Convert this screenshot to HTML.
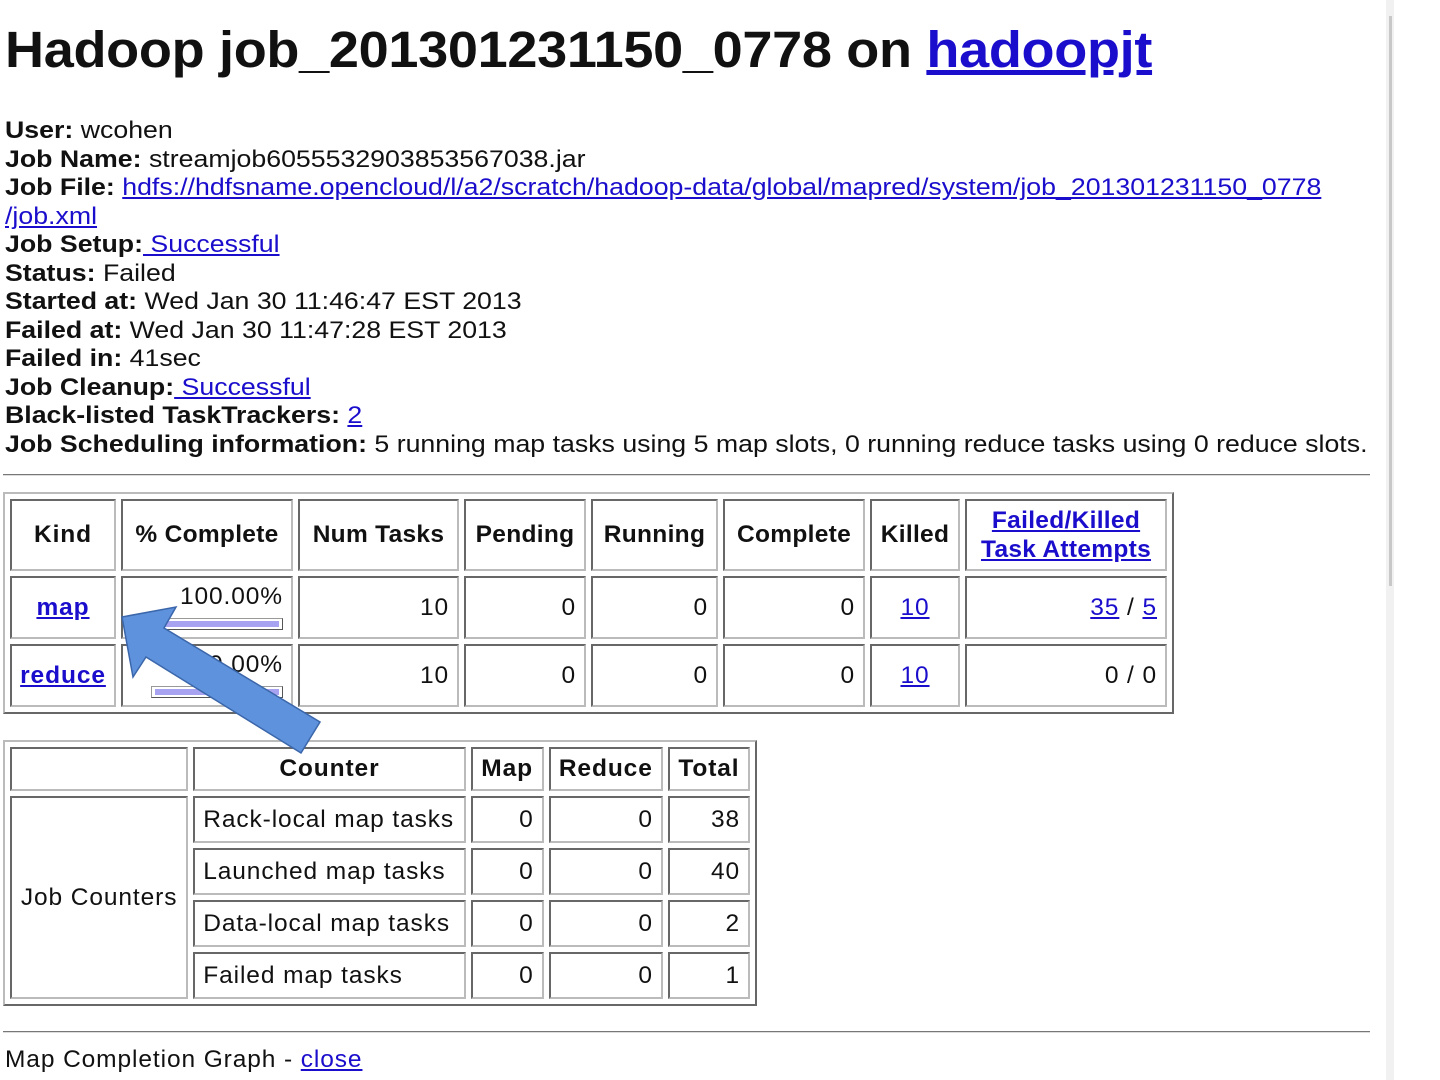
<!DOCTYPE html>
<html><head><meta charset="utf-8">
<style>
html,body{margin:0;padding:0;background:#fff;width:1440px;height:1080px;overflow:hidden;position:relative}
body{font-family:"Liberation Sans",Arial,sans-serif;color:#111}
a{color:#1a0dcc;text-decoration:underline}
h1{position:absolute;left:5px;top:20px;margin:0;font-size:51px;font-weight:bold;line-height:60px;letter-spacing:-0.3px;transform:scaleX(1.06);transform-origin:0 0;white-space:nowrap}
.info{position:absolute;left:5px;top:117px;font-size:24.5px;line-height:28.5px;white-space:nowrap;transform:scaleX(1.09);transform-origin:0 0}
.hr{position:absolute;left:3px;width:1367px;height:0;border-top:1px solid #777;border-bottom:1px solid #ddd}
table{position:absolute;border-collapse:separate;border-spacing:5px;border:2px outset #bbb;table-layout:fixed;font-size:24.5px;letter-spacing:0.9px}
td,th{border:2px inset #bbb;box-sizing:border-box;padding:0 8px}
th{font-weight:bold}
.r{text-align:right}
.c{text-align:center}
.bar{display:inline-block;width:130px;height:10px;border:1px solid #555;border-top-color:#999;border-left-color:#999;background:#fff;position:relative;vertical-align:middle}
.bar i{position:absolute;left:3px;right:3px;top:2px;bottom:2px;background:#a8a3f0}
.sb{position:absolute;left:1386px;top:0;width:8px;height:1080px;background:#f1f1f1}
.sb i{position:absolute;left:3px;top:16px;width:3px;height:570px;background:#c8c8c8}
</style></head><body>
<h1>Hadoop job_201301231150_0778 on <a href="#">hadoopjt</a></h1>
<div class="info">
<b>User:</b> wcohen<br>
<b>Job Name:</b> streamjob6055532903853567038.jar<br>
<b>Job File:</b> <a href="#">hdfs://hdfsname.opencloud/l/a2/scratch/hadoop-data/global/mapred/system/job_201301231150_0778</a><br>
<a href="#">/job.xml</a><br>
<b>Job Setup:</b><a href="#"> Successful</a><br>
<b>Status:</b> Failed<br>
<b>Started at:</b> Wed Jan 30 11:46:47 EST 2013<br>
<b>Failed at:</b> Wed Jan 30 11:47:28 EST 2013<br>
<b>Failed in:</b> 41sec<br>
<b>Job Cleanup:</b><a href="#"> Successful</a><br>
<b>Black-listed TaskTrackers:</b> <a href="#">2</a><br>
<b>Job Scheduling information:</b> 5 running map tasks using 5 map slots, 0 running reduce tasks using 0 reduce slots.
</div>
<div class="hr" style="top:474px"></div>

<table style="left:3px;top:492px;width:1171px">
<colgroup><col style="width:106px"><col style="width:172px"><col style="width:161px"><col style="width:122px"><col style="width:127px"><col style="width:142px"><col style="width:90px"><col style="width:202px"></colgroup>
<tr style="height:72px"><th style="padding:0 2px">Kind</th><th style="padding:0 2px;letter-spacing:0.3px">% Complete</th><th style="padding:0 2px;letter-spacing:0.3px">Num Tasks</th><th style="padding:0 2px;letter-spacing:0.3px">Pending</th><th style="padding:0 2px;letter-spacing:0.3px">Running</th><th style="padding:0 2px;letter-spacing:0.3px">Complete</th><th style="padding:0 2px;letter-spacing:0.3px">Killed</th><th style="line-height:29px;padding:0 2px;letter-spacing:0.3px"><a href="#">Failed/Killed<br>Task Attempts</a></th></tr>
<tr style="height:63px"><th class="c"><a href="#">map</a></th><td class="r" style="line-height:26px;vertical-align:top;padding-top:6px">100.00%<br><span class="bar"><i></i></span></td><td class="r">10</td><td class="r">0</td><td class="r">0</td><td class="r">0</td><td class="c"><a href="#">10</a></td><td class="r"><a href="#">35</a> / <a href="#">5</a></td></tr>
<tr style="height:63px"><th class="c" style="padding:0 2px"><a href="#">reduce</a></th><td class="r" style="line-height:26px;vertical-align:top;padding-top:6px">100.00%<br><span class="bar"><i></i></span></td><td class="r">10</td><td class="r">0</td><td class="r">0</td><td class="r">0</td><td class="c"><a href="#">10</a></td><td class="r">0 / 0</td></tr>
</table>

<table style="left:3px;top:740px;width:754px">
<colgroup><col style="width:178px"><col style="width:272px"><col style="width:73px"><col style="width:114px"><col style="width:82px"></colgroup>
<tr style="height:44px"><th></th><th>Counter</th><th style="padding:0 2px">Map</th><th style="padding:0 2px">Reduce</th><th style="padding:0 2px">Total</th></tr>
<tr style="height:47px"><td rowspan="4" class="c" style="padding:0 2px">Job Counters</td><td>Rack-local map tasks</td><td class="r">0</td><td class="r">0</td><td class="r">38</td></tr>
<tr style="height:47px"><td>Launched map tasks</td><td class="r">0</td><td class="r">0</td><td class="r">40</td></tr>
<tr style="height:47px"><td>Data-local map tasks</td><td class="r">0</td><td class="r">0</td><td class="r">2</td></tr>
<tr style="height:47px"><td>Failed map tasks</td><td class="r">0</td><td class="r">0</td><td class="r">1</td></tr>
</table>

<div class="hr" style="top:1031px"></div>
<div style="position:absolute;left:5px;top:1046px;font-size:24.5px;letter-spacing:0.9px">Map Completion Graph - <a href="#">close</a></div>

<svg style="position:absolute;left:0;top:0" width="1440" height="1080">
<polygon points="122,617 176,607 164,628 320,722 301,753 146,657 133,677" fill="#5e92dc" stroke="#3b66aa" stroke-width="1.5"/>
</svg>
<div class="sb"><i></i></div>
</body></html>
